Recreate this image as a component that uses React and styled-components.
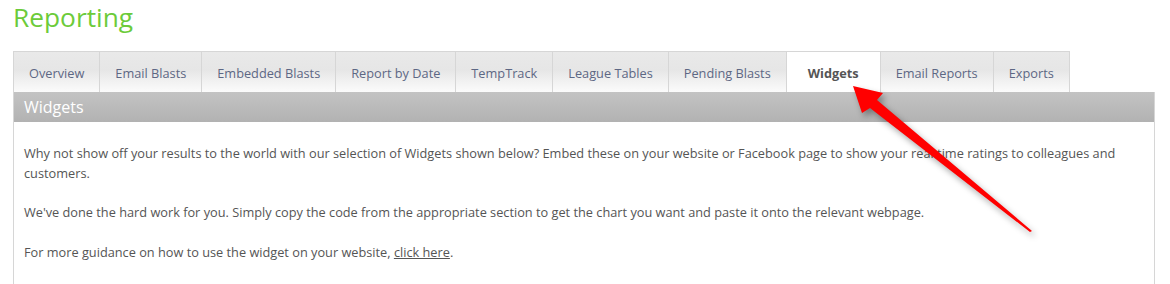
import React from "react";
import styled, { createGlobalStyle } from "styled-components";

const Global = createGlobalStyle`
  html, body { margin: 0; padding: 0; background: #fff; }
  body { font-family: "Open Sans", "Liberation Sans", sans-serif; }
`;

const Page = styled.div`
  position: relative;
  width: 1170px;
  height: 284px;
  overflow: hidden;
  padding: 0 15px 0 13px;
  box-sizing: border-box;
`;

const Title = styled.h1`
  margin: 0;
  height: 51px;
  font-size: 26.3px;
  font-weight: 400;
  line-height: 34px;
  color: #6ccb3a;
`;

const TabBar = styled.div`
  display: flex;
  height: 41px;
  box-sizing: border-box;
`;

const Tab = styled.div`
  display: flex;
  align-items: center;
  padding: 1px ${(p) => (p.$active ? "21px" : "15px")} 0;
  font-size: 12.75px;
  color: ${(p) => (p.$active ? "#555" : "#5d6784")};
  font-weight: ${(p) => (p.$active ? 700 : 400)};
  border-top: 1px solid #d6d6d6;
  border-right: 1px solid #d6d6d6;
  border-left: ${(p) => (p.$first ? "1px solid #d6d6d6" : "none")};
  background: ${(p) =>
    p.$active
      ? "#fff"
      : "linear-gradient(to bottom, #e9e9e9 0%, #e6e6e6 45%, #f0f0f0 70%, #fbfbfb 100%)"};
  white-space: nowrap;
`;

const Panel = styled.div`
  border-left: 1px solid #d6d6d6;
  border-right: 1px solid #d6d6d6;
  height: 200px;
`;

const PanelHeader = styled.div`
  height: 30px;
  display: flex;
  align-items: center;
  padding: 0 10px;
  font-size: 16px;
  color: #fff;
  background: linear-gradient(to bottom, #c3c3c3, #b2b2b2);
`;

const Body = styled.div`
  padding: 22px 10px 0 10px;
  font-size: 12.75px;
  line-height: 19.5px;
  color: #555;
`;

const Para = styled.p`
  margin: 0 0 20px 0;
`;

const Link = styled.a`
  color: #555;
  text-decoration: underline;
`;

const ArrowSvg = styled.svg`
  position: absolute;
  left: 0;
  top: 0;
  pointer-events: none;
  filter: drop-shadow(3px 4px 3px rgba(0, 0, 0, 0.35));
`;

const tabs = [
  "Overview",
  "Email Blasts",
  "Embedded Blasts",
  "Report by Date",
  "TempTrack",
  "League Tables",
  "Pending Blasts",
  "Widgets",
  "Email Reports",
  "Exports",
];

export default function App() {
  return (
    <Page>
      <Global />
      <Title>Reporting</Title>
      <TabBar>
        {tabs.map((t, i) => (
          <Tab key={t} $first={i === 0} $active={t === "Widgets"}>
            {t}
          </Tab>
        ))}
      </TabBar>
      <Panel>
        <PanelHeader>Widgets</PanelHeader>
        <Body>
          <Para>
            Why not show off your results to the world with our selection of Widgets shown below? Embed these on your website or Facebook page to show your real time ratings to colleagues and customers.
          </Para>
          <Para>
            We've done the hard work for you. Simply copy the code from the appropriate section to get the chart you want and paste it onto the relevant webpage.
          </Para>
          <Para>
            For more guidance on how to use the widget on your website, <Link href="#">click here</Link>.
          </Para>
        </Body>
      </Panel>
      <ArrowSvg width="1170" height="284" viewBox="0 0 1170 284">
        <polygon
          points="853,86 883,93 877,100 1032,231 1030,232 870,108 862,113"
          fill="#ff0000"
        />
      </ArrowSvg>
    </Page>
  );
}
